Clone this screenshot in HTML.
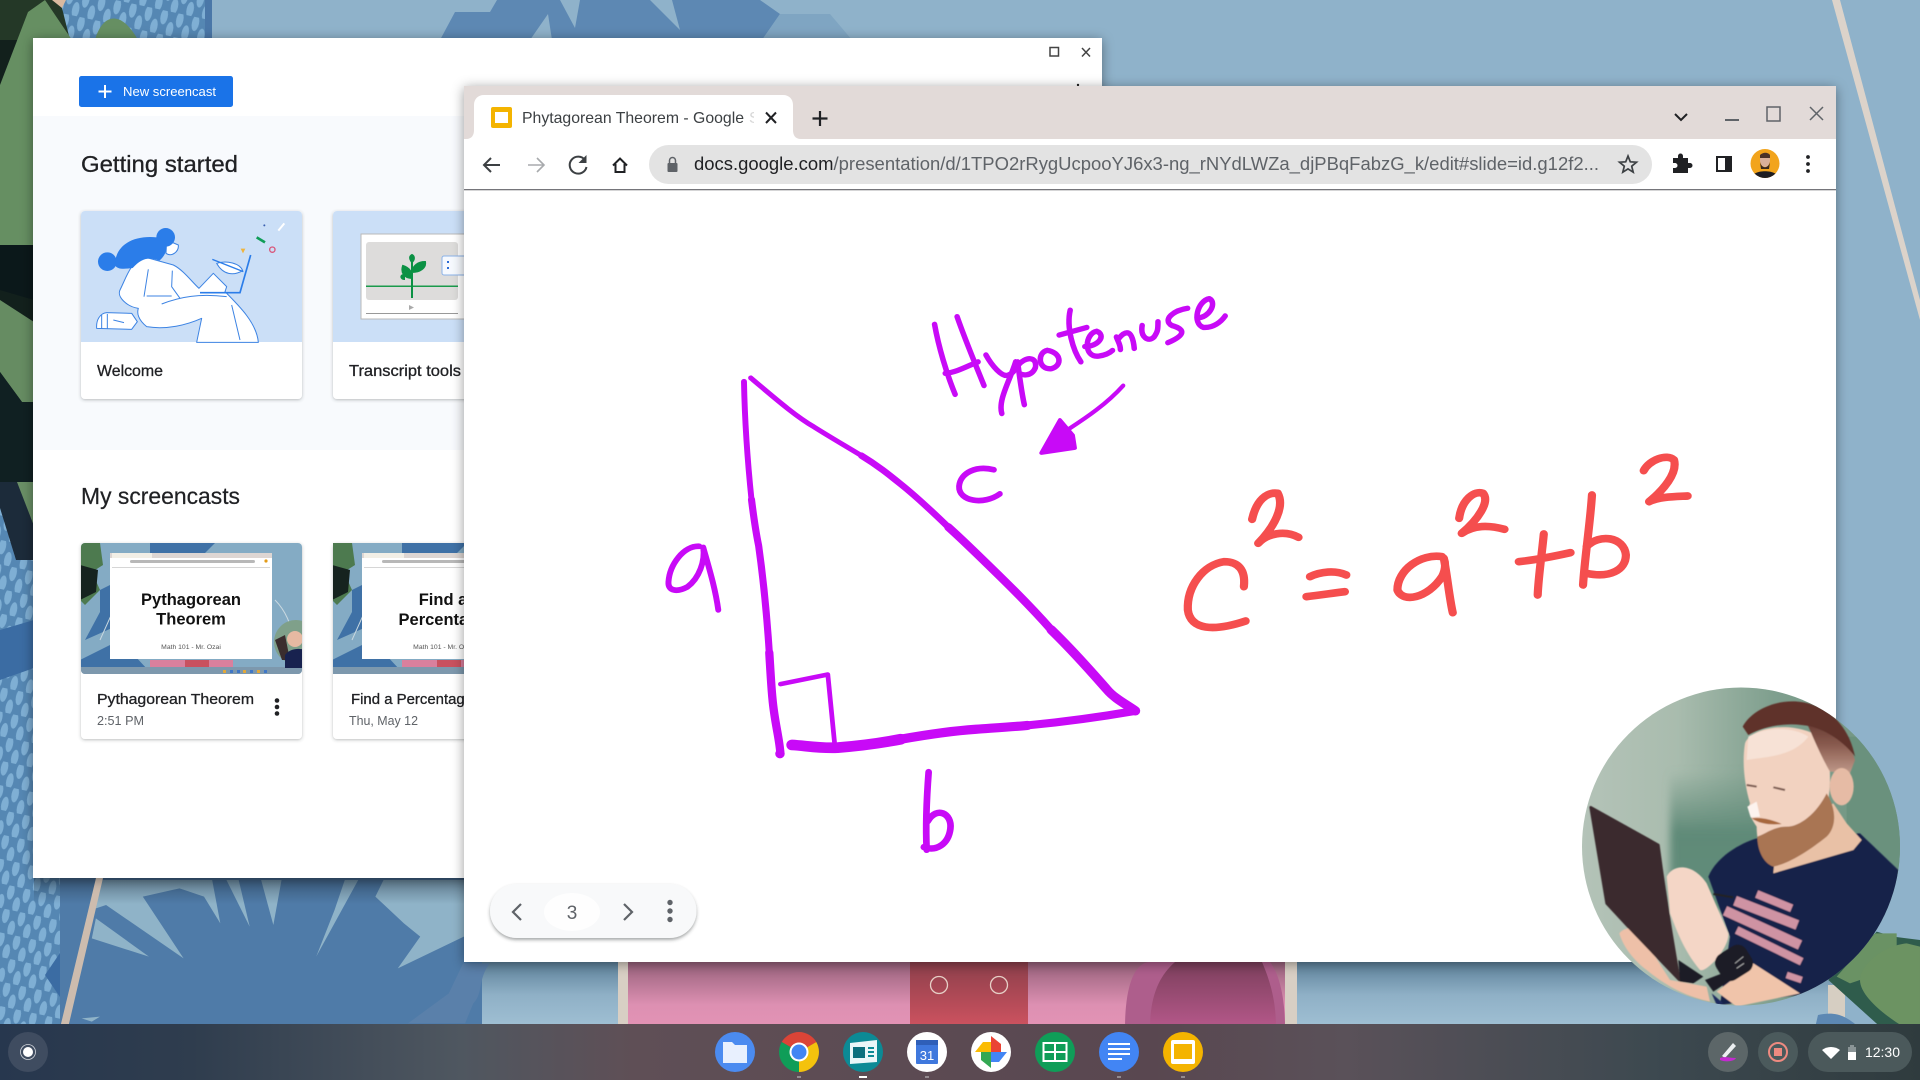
<!DOCTYPE html>
<html><head><meta charset="utf-8"><title>Phytagorean Theorem</title>
<style>html,body{margin:0;padding:0;width:1920px;height:1080px;overflow:hidden;background:#8fb2ca}svg{display:block;font-family:"Liberation Sans",sans-serif}</style>
</head><body>
<svg width="1920" height="1080" viewBox="0 0 1920 1080" xmlns="http://www.w3.org/2000/svg">
<defs>
<pattern id="mesh" width="16" height="24" patternUnits="userSpaceOnUse" patternTransform="rotate(12)">
<rect width="16" height="24" fill="#5587b3"/><ellipse cx="4" cy="6" rx="3.6" ry="8" fill="#7fafd4"/><ellipse cx="12" cy="18" rx="3.6" ry="8" fill="#7fafd4"/>
</pattern>
<linearGradient id="pink" x1="0" y1="0" x2="0" y2="1"><stop offset="0" stop-color="#96607a"/><stop offset=".65" stop-color="#dd90b2"/><stop offset="1" stop-color="#e393b5"/></linearGradient>
<linearGradient id="red" x1="0" y1="0" x2="0" y2="1"><stop offset="0" stop-color="#8c3f4b"/><stop offset="1" stop-color="#cf5360"/></linearGradient>
<linearGradient id="ring" x1="0" y1="0" x2="0" y2="1"><stop offset="0" stop-color="#7c3f5c"/><stop offset="1" stop-color="#b5588a"/></linearGradient>
<linearGradient id="lite" x1="0" y1="0" x2="0" y2="1"><stop offset="0" stop-color="#5c8099"/><stop offset=".5" stop-color="#8fb0c6"/><stop offset="1" stop-color="#a0c0d4"/></linearGradient>
<linearGradient id="shade" x1="0" y1="0" x2="0" y2="1"><stop offset="0" stop-color="#1c2c3c" stop-opacity=".45"/><stop offset="1" stop-color="#1c2c3c" stop-opacity="0"/></linearGradient>
<linearGradient id="shelf" x1="0" y1="0" x2="1" y2="0">
<stop offset="0" stop-color="#27374e"/><stop offset=".1" stop-color="#2f3d4e"/><stop offset=".24" stop-color="#4f5760"/><stop offset=".33" stop-color="#5f4f56"/><stop offset=".6" stop-color="#594750"/><stop offset=".7" stop-color="#5a5159"/><stop offset=".86" stop-color="#3d4950"/><stop offset="1" stop-color="#2f3b3e"/>
</linearGradient>
<linearGradient id="cambg" x1="0" y1="0" x2="1" y2="0"><stop offset="0" stop-color="#b4c3b8"/><stop offset=".3" stop-color="#a9bcae"/><stop offset=".6" stop-color="#7f9f8e"/><stop offset="1" stop-color="#6f9480"/></linearGradient>
<linearGradient id="camdark" x1="0" y1="0" x2="0" y2="1"><stop offset="0" stop-color="#668f7c" stop-opacity="0"/><stop offset=".45" stop-color="#5f8a78"/><stop offset="1" stop-color="#628c79"/></linearGradient>
<linearGradient id="fade" x1="0" y1="0" x2="0" y2="1"><stop offset="0" stop-color="#5f332c"/><stop offset=".5" stop-color="#8a5c50"/><stop offset="1" stop-color="#c09a8a"/></linearGradient>
<filter id="sh" x="-5%" y="-5%" width="110%" height="110%"><feDropShadow dx="0" dy="2" stdDeviation="6" flood-color="#000" flood-opacity=".4"/></filter>
<filter id="cs" x="-5%" y="-5%" width="110%" height="115%"><feDropShadow dx="0" dy="1" stdDeviation="1.5" flood-color="#3c4043" flood-opacity=".35"/></filter>
<filter id="ps" x="-5%" y="-15%" width="110%" height="140%"><feDropShadow dx="0" dy="2" stdDeviation="1.5" flood-color="#3c4043" flood-opacity=".45"/></filter>
<filter id="soft" x="-5%" y="-5%" width="110%" height="110%"><feGaussianBlur stdDeviation="1.6"/></filter>
<filter id="softer" x="-20%" y="-20%" width="140%" height="140%"><feGaussianBlur stdDeviation="12"/></filter>
<clipPath id="cam"><circle cx="1741" cy="846.5" r="159"/></clipPath>
<clipPath id="ava"><ellipse cx="1765" cy="163.500" rx="14.500" ry="14.500"/></clipPath>
<clipPath id="tabc"><rect x="520" y="100" width="234" height="32"/></clipPath>
<clipPath id="th"><rect x="81" y="543" width="221" height="131" rx="4"/></clipPath>
<clipPath id="th2"><rect x="333" y="543" width="131" height="131"/></clipPath>
<g id="thumb">
<rect x="80" y="543" width="222" height="131" fill="#84abc4"/>
<path d="M150 543H215L205 553H150ZM100 590L130 575V620L85 640L100 612ZM80 660L120 640L148 670H80Z" fill="#3f71a6"/>
<path d="M80 543H100L103 565L92 572L100 590L85 605L80 600Z" fill="#4d7a4f"/><path d="M80 565L98 570L96 592L80 600Z" fill="#16231f"/>
<path d="M100 640L118 600M275 600C285 610 292 625 293 640" stroke="#c9d8e0" stroke-width="1" fill="none"/>
<rect x="110" y="553" width="162" height="106" fill="#fff"/><rect x="110" y="553" width="162" height="5" fill="#ddd6d3"/>
<rect x="112" y="553" width="40" height="5" fill="#f2efe6"/>
<rect x="130" y="560" width="125" height="3" rx="1.5" fill="#b8b8b8"/><rect x="112" y="567" width="158" height=".6" fill="#bbb"/>
<circle cx="266" cy="561" r="1.6" fill="#e39b18"/>
<rect x="150" y="660" width="83" height="8" fill="#d9809d"/><rect x="185" y="660" width="24" height="8" fill="#c9515f"/>
<rect x="80" y="667" width="222" height="7" fill="#7d98ad"/>
<path d="M230 670h3v3h-3zM237 670h3v3h-3zM250 670h3v3h-3zM264 670h3v3h-3z" fill="#3f77c7"/>
<path d="M223 670h3v3h-3zM243 670h3v3h-3zM257 670h3v3h-3z" fill="#e2a83a"/>
</g>
</defs>

<!-- wallpaper -->
<rect width="1920" height="1080" fill="#8fb2ca"/>
<rect x="0" y="0" width="212" height="40" fill="url(#mesh)"/>
<path d="M440 40L455 12L490 12L497 0L760 0L780 14L762 40Z" fill="#5d88b3"/>
<path d="M762 40L780 14L830 14L852 40Z" fill="#7fa5c2"/>
<path d="M560 0L580 0L575 28ZM650 0L672 0L680 30ZM530 40L548 14L552 40Z" fill="#8fb2ca"/>
<path d="M205 0H212V40H205Z" fill="#4a77a8"/>
<rect x="0" y="0" width="34" height="560" fill="#12201c"/>
<path d="M0 0H60L70 40H0Z" fill="#243827"/>
<path d="M0 85L28 12L45 0L72 40V245L0 245Z" fill="#668f62"/>
<path d="M95 40C102 15 120 8 138 40Z" fill="#668f62"/><path d="M52 0H66L62 8Z" fill="#d9b9a0"/>
<path d="M0 245H34V300L0 290Z" fill="#0b181a"/>
<path d="M0 300L34 322V402L22 402L0 372Z" fill="#668c62"/>
<path d="M0 372L22 402L34 402V482H0Z" fill="#102022"/>
<path d="M0 482H34V560H0Z" fill="#1c2b3a"/>
<path d="M17 482H34V526Z" fill="#6a8f66"/>
<path d="M0 508L16 560H34V1028H0Z" fill="url(#mesh)"/>
<path d="M0 630L34 620V668L0 680Z" fill="#3b6ca3"/>
<rect x="0" y="878" width="100" height="150" fill="url(#mesh)"/>
<path d="M45 975L62 950L62 1000Z" fill="#3b6ca3"/>
<rect x="60" y="878" width="560" height="150" fill="#4f7ba8"/>
<rect x="482" y="962" width="140" height="66" fill="url(#lite)"/>
<g transform="translate(0,860) scale(.408,.3333)">
<path d="M1135 310H1200C1170 360 1185 400 1160 430L1140 490H1000L1100 400Z" fill="#5a80aa"/>
<path d="M245 60H520L540 190L500 110L440 85L350 110L450 295L260 135L235 145Z" fill="#8fb3c8"/>
<path d="M235 175L365 290L225 235Z" fill="#8fb3c8"/>
<path d="M555 60H585L612 200Z" fill="#8fb3c8"/><path d="M640 60H690L670 195Z" fill="#8fb3c8"/>
<path d="M845 60H878L775 290L820 150Z" fill="#8fb3c8"/>
<path d="M940 60H1140V228L975 325L1030 230L990 190L920 110Z" fill="#8fb3c8"/>
<path d="M200 475L245 470L225 485Z" fill="#8fb3c8"/>
</g>
<rect x="34" y="878" width="430" height="26" fill="url(#shade)"/>
<path d="M96 878L103 878L68 1028L60 1028Z" fill="#cdbcae"/>
<rect x="618" y="962" width="11" height="66" fill="#d8cfc4"/>
<rect x="628" y="962" width="660" height="66" fill="url(#pink)"/>
<rect x="910" y="962" width="118" height="66" fill="url(#red)"/>
<path d="M1125 1028C1125 985 1135 962 1150 962H1270C1280 975 1285 1000 1285 1028Z" fill="#ae5e8c"/>
<path d="M1150 1028C1150 995 1160 975 1175 962H1262C1272 985 1276 1005 1276 1028Z" fill="url(#ring)"/>
<rect x="1285" y="962" width="12" height="66" fill="#d8cfc4"/>
<rect x="1297" y="962" width="540" height="66" fill="url(#lite)"/>
<circle cx="939" cy="985" r="8.5" fill="none" stroke="#e6cfc6" stroke-width="1.3"/>
<circle cx="999" cy="985" r="8.5" fill="none" stroke="#e6cfc6" stroke-width="1.3"/>
<rect x="1836" y="0" width="84" height="1030" fill="#8fb2ca"/>
<path d="M1832 0H1840L1920 300V320Z" fill="#dcd3ca"/>
<rect x="1828" y="985" width="17" height="45" fill="#d6cec2"/>
<path d="M1818 1015C1840 1010 1850 1020 1860 1028H1815Z" fill="#5d88b3"/>
<g transform="translate(1560,670) scale(.33333)">
<path d="M805 930L950 785L1000 800L1080 810V1070H960Z" fill="#2f5c4c"/>
<path d="M830 920L945 790L1010 790L1010 830L900 930L870 940Z" fill="#6a9264"/>
<path d="M900 930C900 890 960 830 1040 820L1080 830V1070H1030C980 1040 900 980 900 930Z" fill="#6c9362"/>
</g>

<!-- back window -->
<g filter="url(#sh)"><rect x="33" y="38" width="1069" height="840" fill="#fff"/></g>
<rect x="33" y="116" width="1069" height="334" fill="#f8fafd"/>
<rect x="79" y="76" width="154" height="31" rx="2.5" fill="#1a73e8"/>
<path d="M105 85V98M98.500 91.500H111.500" stroke="#fff" stroke-width="2"/>
<text x="123" y="96" font-size="13" fill="#fff" textLength="93" lengthAdjust="spacingAndGlyphs">New screencast</text>
<text x="81" y="172" font-size="23" fill="#202124" stroke="#202124" stroke-width=".3" textLength="157" lengthAdjust="spacingAndGlyphs">Getting started</text>

<g filter="url(#cs)"><rect x="81" y="211" width="221" height="188" rx="4" fill="#fff"/></g>
<path d="M81 342V215a4 4 0 0 1 4-4H298a4 4 0 0 1 4 4V342Z" fill="#cbdff7"/>
<g transform="scale(.33333)">
<g stroke="#3c83e3" stroke-width="3" fill="#fff" stroke-linejoin="round">
<path d="M290 985C288 960 300 940 320 938L395 940L412 965L395 988Z"/>
<path d="M305 945V985M322 942V986M340 960L372 968"/>
<path d="M430 770L520 795C550 810 575 845 597 865L640 820L680 860L675 875C720 920 770 970 775 1027H590L605 955C560 975 500 990 440 980C415 960 410 940 415 925C380 920 350 890 360 870C380 830 390 790 430 770Z"/>
<path d="M485 912C540 890 600 880 680 890M445 808L432 890M517 812L515 860L540 895M440 888H515M695 915L720 1020" fill="none"/>
<path d="M500 720L535 735C537 755 515 772 498 760Z"/>
<path d="M650 790C680 780 720 790 728 812C700 828 670 825 650 790Z"/>
</g>
<circle cx="497" cy="712" r="28" fill="#2b7de9"/><circle cx="322" cy="785" r="28" fill="#2b7de9"/>
<path d="M345 795C345 735 400 705 470 712C515 725 500 765 478 782C445 770 425 775 398 804C370 808 350 808 345 795Z" fill="#2b7de9"/>
<path d="M752 765L720 878H600" fill="none" stroke="#2b7de9" stroke-width="5"/>
<path d="M637 778L730 815" stroke="#2b7de9" stroke-width="4"/>
<path d="M770 712L795 727" stroke="#0f9d58" stroke-width="8"/>
<circle cx="817" cy="749" r="8" fill="none" stroke="#d9567a" stroke-width="4"/>
<path d="M722 746H736L729 760Z" fill="#f0b43c"/>
<path d="M835 692L853 670" stroke="#fff" stroke-width="6"/><circle cx="793" cy="676" r="3" fill="#3a5fb0"/>
</g>
<text x="97" y="376" font-size="16" fill="#202124" stroke="#202124" stroke-width=".3" textLength="66" lengthAdjust="spacingAndGlyphs">Welcome</text>

<g filter="url(#cs)"><rect x="333" y="211" width="221" height="188" rx="4" fill="#fff"/></g>
<path d="M333 342V215a4 4 0 0 1 4-4H550a4 4 0 0 1 4 4V342Z" fill="#cbdff7"/>
<rect x="361" y="234" width="110" height="85" fill="#fff" stroke="#b9b9b9" stroke-width="1"/>
<rect x="366" y="242" width="92" height="58" rx="3" fill="#dddcdb"/>
<rect x="366" y="285.500" width="92" height="1.500" fill="#1a9a4b"/>
<rect x="366" y="313" width="92" height="1" fill="#999"/>
<path d="M412 255V298M412 278C404 278 401 272 403 266C409 268 412 272 412 278ZM412 272C420 272 426 268 425 262C418 262 413 266 412 272ZM412 262C409 258 410 256 412 255C414 256 415 259 412 262ZM404 275C400 275 401 279 404 279Z" fill="#0b9144" stroke="#0b9144" stroke-width="2"/>
<path d="M409 305L414 307.500L409 310Z" fill="#aaa"/>
<rect x="442" y="256" width="30" height="19" rx="2" fill="#f6f9fe" stroke="#8ab2e8"/>
<path d="M447 262H449M447 268H449" stroke="#2b6bd6" stroke-width="2"/>
<text x="349" y="376" font-size="16" fill="#202124" stroke="#202124" stroke-width=".3" textLength="112" lengthAdjust="spacingAndGlyphs">Transcript tools</text>

<text x="81" y="504" font-size="23" fill="#202124" stroke="#202124" stroke-width=".2" textLength="159" lengthAdjust="spacingAndGlyphs">My screencasts</text>

<g filter="url(#cs)"><rect x="81" y="543" width="221" height="196" rx="4" fill="#fff"/></g>
<g clip-path="url(#th)">
<use href="#thumb"/>
<circle cx="296" cy="642" r="22" fill="#7fa08a"/>
<path d="M275 640L285 635L290 660L282 660Z" fill="#3a2d2e"/>
<circle cx="295" cy="639" r="8" fill="#e6b9a2"/><path d="M285 655C290 648 300 648 305 650V668H285Z" fill="#18224f"/>
</g>
<text x="191" y="605" font-size="16.500" font-weight="bold" fill="#111" text-anchor="middle">Pythagorean</text>
<text x="191" y="624.500" font-size="16.500" font-weight="bold" fill="#111" text-anchor="middle">Theorem</text>
<text x="191" y="649" font-size="6.800" fill="#555" text-anchor="middle">Math 101 - Mr. Ozai</text>
<text x="97" y="704" font-size="15" fill="#202124" stroke="#202124" stroke-width=".3" textLength="157" lengthAdjust="spacingAndGlyphs">Pythagorean Theorem</text>
<text x="97" y="725" font-size="13" fill="#5f6368" textLength="47" lengthAdjust="spacingAndGlyphs">2:51 PM</text>
<circle cx="277" cy="700.500" r="2.300" fill="#202124"/><circle cx="277" cy="707" r="2.300" fill="#202124"/><circle cx="277" cy="713.500" r="2.300" fill="#202124"/>

<g filter="url(#cs)"><rect x="333" y="543" width="221" height="196" rx="4" fill="#fff"/></g>
<g clip-path="url(#th2)"><use href="#thumb" x="252"/></g>
<text x="443" y="605" font-size="16.500" font-weight="bold" fill="#111" text-anchor="middle">Find a</text>
<text x="443" y="625" font-size="16.500" font-weight="bold" fill="#111" text-anchor="middle">Percentage</text>
<text x="443" y="649" font-size="6.800" fill="#555" text-anchor="middle">Math 101 - Mr. Ozai</text>
<text x="351" y="704" font-size="15" fill="#202124" stroke="#202124" stroke-width=".3" textLength="122" lengthAdjust="spacingAndGlyphs">Find a Percentage</text>
<text x="349" y="725" font-size="13" fill="#5f6368" textLength="69" lengthAdjust="spacingAndGlyphs">Thu, May 12</text>

<rect x="1050" y="47.500" width="8.500" height="8.500" fill="none" stroke="#444" stroke-width="1.500"/>
<path d="M1082 48L1090 56.500M1090 48L1082 56.500" stroke="#444" stroke-width="1.500"/>
<circle cx="1078" cy="85" r="1.200" fill="#222"/>

<!-- chrome window -->
<g filter="url(#sh)"><rect x="464" y="86" width="1372" height="876" fill="#fff"/></g>
<rect x="464" y="86" width="1372" height="53" fill="#e2dad8"/>
<path d="M464 139H466C472 139 474 135 474 130V105C474 99 478 95 484 95H783C789 95 793 99 793 105V130C793 135 795 139 801 139H464Z" fill="#fff"/>
<rect x="464" y="189" width="1372" height="1.300" fill="#75757a"/>
<rect x="491" y="107" width="21" height="21" rx="2" fill="#f4b400"/><rect x="495" y="112" width="13" height="11" fill="#fff"/>
<g clip-path="url(#tabc)">
<text x="522" y="123" font-size="16" fill="#3c4043" textLength="222" lengthAdjust="spacingAndGlyphs">Phytagorean Theorem - Google</text>
<text x="749" y="123" font-size="16" fill="#d8d8d8">S</text></g>
<path d="M766 112.500L776 123M776 112.500L766 123" stroke="#202124" stroke-width="2"/>
<path d="M820 111V126M812.500 118.500H827.500" stroke="#202124" stroke-width="2.200"/>
<path d="M1675 114L1681 120L1687 114" fill="none" stroke="#202124" stroke-width="2"/>
<path d="M1725 120H1739" stroke="#5f6368" stroke-width="2"/>
<rect x="1767" y="107" width="13" height="14" fill="none" stroke="#5f6368" stroke-width="1.500"/>
<path d="M1810 107L1823 120M1823 107L1810 120" stroke="#5f6368" stroke-width="1.500"/>

<path d="M500 165H485M491 158L484 165L491 172" fill="none" stroke="#3c4043" stroke-width="2"/>
<path d="M528 165H543M537 158L544 165L537 172" fill="none" stroke="#a8aaad" stroke-width="1.600"/>
<path d="M585 160A8.500 8.500 0 1 0 586.500 167" fill="none" stroke="#3c4043" stroke-width="2"/><path d="M586.500 155V163H578.500Z" fill="#3c4043"/>
<path d="M613 165.500L620 158.500L627 165.500M615.500 164V172H624.500V164" fill="none" stroke="#202124" stroke-width="2"/>
<rect x="649" y="145" width="1003" height="39" rx="19.500" fill="#e3e3e3"/>
<rect x="667.500" y="163" width="10" height="9" rx="1" fill="#5f6368"/><path d="M669.500 163V160.500A3 3 0 0 1 675.500 160.500V163" fill="none" stroke="#5f6368" stroke-width="1.500"/>
<text x="694" y="170" font-size="18" fill="#5f6368" textLength="905" lengthAdjust="spacingAndGlyphs"><tspan fill="#202124">docs.google.com</tspan>/presentation/d/1TPO2rRygUcpooYJ6x3-ng_rNYdLWZa_djPBqFabzG_k/edit#slide=id.g12f2...</text>
<path d="M1628 156L1630.300 161.800L1636.500 162.200L1631.700 166.200L1633.200 172.200L1628 168.900L1622.800 172.200L1624.300 166.200L1619.500 162.200L1625.700 161.800Z" fill="none" stroke="#3c4043" stroke-width="1.700"/>
<path d="M1673 158H1678V156A2.500 2.500 0 0 1 1683 156V158H1688V163H1690A2.500 2.500 0 0 1 1690 168H1688V173H1673V168H1675A2.500 2.500 0 0 0 1675 163H1673Z" fill="#202124"/>
<rect x="1717" y="157" width="14" height="14" fill="#fff" stroke="#202124" stroke-width="2"/><rect x="1725" y="157" width="6" height="14" fill="#202124"/>
<g clip-path="url(#ava)"><rect x="1750" y="149" width="30" height="30" fill="#f2a41c"/><ellipse cx="1765" cy="160" rx="5" ry="7" fill="#d9b09a"/><path d="M1760 162C1762 169 1768 169 1770 162L1769 169H1761Z" fill="#3a2a20"/><path d="M1751 178C1753 169 1777 169 1779 178Z" fill="#1c1c22"/><path d="M1760 155C1763 152 1768 152 1770 155L1770 158L1760 158Z" fill="#4a3228"/></g>
<circle cx="1808" cy="157" r="1.900" fill="#202124"/><circle cx="1808" cy="164" r="1.900" fill="#202124"/><circle cx="1808" cy="171" r="1.900" fill="#202124"/>

<!-- ink: triangle -->
<g transform="translate(640,270) scale(.3954,.3827)" fill="none" stroke="#c80af7" stroke-linecap="round" stroke-linejoin="round">
<path stroke-width="15" d="M263 292C265 400 272 500 282 600"/>
<path stroke-width="18" d="M282 600C288 650 294 690 300 720C315 830 322 920 327 1000"/>
<path stroke-width="21" d="M327 1000C330 1050 332 1090 335 1120C340 1180 352 1220 355 1262"/>
<circle cx="354" cy="1264" r="12" fill="#c80af7" stroke="none"/>
<path stroke-width="13" d="M280 282C330 325 390 380 440 410C480 436 520 460 560 485"/>
<path stroke-width="17" d="M560 485C600 510 630 535 660 560C700 593 740 632 780 672"/>
<path stroke-width="21" d="M780 672C805 695 828 718 850 740C920 810 980 870 1040 940"/>
<path stroke-width="24" d="M1040 940C1100 1000 1150 1060 1180 1095C1200 1120 1230 1135 1253 1152"/>
<path stroke-width="21" d="M1253 1152C1180 1165 1080 1180 980 1190"/>
<path stroke-width="24" d="M980 1190C940 1194 890 1197 850 1200C780 1205 720 1215 660 1226"/>
<path stroke-width="28" d="M660 1226C600 1238 550 1244 500 1248C450 1250 420 1243 384 1241"/>
<path stroke-width="12" d="M355 1082L475 1057L492 1235"/>
<path stroke-width="15" d="M150 722C110 720 75 770 72 815C70 840 95 842 120 828C150 805 165 760 160 725C175 780 190 830 198 888"/>
<path stroke-width="15" d="M895 522C850 510 810 530 807 565C805 605 870 615 910 585"/>
<path stroke-width="17" d="M730 1312C725 1380 722 1450 725 1515M728 1440C750 1400 790 1420 785 1460C780 1500 750 1520 718 1508"/>
<g stroke-width="14">
<path d="M745 142C755 200 775 270 797 325M802 122C825 190 850 250 870 302M772 270C800 268 830 250 855 240"/>
<path d="M875 222C890 250 915 280 930 275C945 270 955 255 950 240M950 240C935 290 905 340 915 375"/>
<path d="M955 240C960 280 965 320 972 352M955 250C975 225 1005 225 1000 255C990 280 965 275 960 270"/>
<path d="M1030 210C1005 215 1005 260 1040 258C1070 250 1065 215 1030 210"/>
<path d="M1088 105C1078 150 1095 210 1115 240M1060 170L1130 150"/>
<path d="M1125 200C1160 200 1180 170 1155 160C1125 165 1120 230 1160 225C1180 222 1190 215 1195 210"/>
<path d="M1205 175C1210 190 1215 195 1215 208M1210 180C1225 160 1245 150 1250 205"/>
<path d="M1270 145C1265 175 1285 190 1300 175C1310 160 1310 155 1310 135"/>
<path d="M1385 100C1350 105 1320 130 1345 145C1380 155 1380 170 1335 190"/>
<path d="M1410 125C1440 125 1460 85 1440 75C1410 80 1395 140 1425 150C1450 152 1470 135 1480 120"/>
</g>
<path stroke-width="11" d="M1222 302C1180 350 1130 385 1085 415"/>
<path d="M1062 392L1015 478L1100 465L1095 432Z" fill="#c80af7" stroke-width="10"/>
</g>
<!-- ink: equation -->
<g transform="translate(1160,430) scale(.357,.3333)" fill="none" stroke="#f54e4e" stroke-width="23" stroke-linecap="round" stroke-linejoin="round">
<path d="M235 470C240 420 220 395 180 395C120 405 75 470 78 540C85 600 150 605 240 573"/>
<path d="M258 268C270 210 300 185 330 190C350 230 320 290 275 340C300 310 350 300 388 322"/>
<path d="M420 440C450 425 490 420 522 435M410 500C450 495 480 490 518 485"/>
<path d="M790 380C730 370 665 420 665 480C680 520 750 505 790 440C800 420 800 400 795 385C805 440 810 500 820 548"/>
<path d="M838 265C845 210 880 180 905 190C925 215 890 270 845 310C880 285 920 285 965 298"/>
<path d="M1005 395C1050 390 1100 380 1150 368M1075 312C1070 370 1060 440 1058 495"/>
<path d="M1210 195C1205 280 1190 380 1185 465M1195 350C1230 310 1300 320 1305 375C1305 420 1260 445 1195 430"/>
<path d="M1355 122C1370 90 1420 70 1440 90C1450 130 1410 180 1370 215C1400 200 1440 200 1478 198"/>
</g>

<!-- nav pill -->
<g filter="url(#ps)"><rect x="490" y="884" width="206.500" height="54" rx="27" fill="#f8f9fa"/></g>
<ellipse cx="572" cy="912" rx="28" ry="19" fill="#fefefe"/>
<path d="M521 904L513 912L521 920" fill="none" stroke="#5f6368" stroke-width="2.200"/>
<path d="M624 904L632 912L624 920" fill="none" stroke="#5f6368" stroke-width="2.200"/>
<text x="572" y="919" font-size="19" fill="#5f6368" text-anchor="middle">3</text>
<circle cx="670" cy="902.500" r="2.700" fill="#5f6368"/><circle cx="670" cy="911" r="2.700" fill="#5f6368"/><circle cx="670" cy="919.500" r="2.700" fill="#5f6368"/>

<!-- shelf -->
<rect x="0" y="1024" width="1920" height="56" fill="url(#shelf)"/>
<circle cx="28" cy="1052" r="20" fill="#3f4c60"/><circle cx="28" cy="1052" r="5" fill="#fff"/><circle cx="28" cy="1052" r="7.500" fill="none" stroke="#d0d4da" stroke-width=".8"/>

<circle cx="735" cy="1052" r="20" fill="#4b8bf0"/><path d="M723 1042H732L735 1045H747V1063H723Z" fill="#e8f0fe"/>
<path d="M799 1052L781.700 1042A20 20 0 0 1 816.300 1042Z" fill="#db4437"/>
<path d="M799 1052L816.300 1042A20 20 0 0 1 799 1072Z" fill="#f4c20d"/>
<path d="M799 1052L799 1072A20 20 0 0 1 781.700 1042Z" fill="#0f9d58"/>
<circle cx="799" cy="1052" r="9.500" fill="#fff"/><circle cx="799" cy="1052" r="7.500" fill="#4285f4"/>
<circle cx="863" cy="1052" r="20" fill="#0c8a95"/>
<path d="M850 1043L877 1040V1062L850 1064Z" fill="#eaf6f8"/><rect x="853" y="1047" width="12" height="11" fill="#0c6f7d"/><path d="M868 1048H874M868 1052H874M868 1056H874" stroke="#0c8a95" stroke-width="2"/>
<circle cx="927" cy="1052" r="20" fill="#fff"/><rect x="916" y="1040" width="22" height="24" rx="1" fill="#3f78dd"/><rect x="916" y="1040" width="22" height="5" fill="#2f5fb8"/>
<text x="927" y="1060" font-size="13" fill="#fff" text-anchor="middle">31</text>
<circle cx="991" cy="1052" r="20" fill="#fff"/>
<path d="M991 1052V1036L1001 1044V1052Z" fill="#ea4335"/><path d="M991 1052H1007L999 1062H991Z" fill="#4285f4"/><path d="M991 1052V1068L981 1060V1052Z" fill="#34a853"/><path d="M991 1052H975L983 1042H991Z" fill="#fbbc04"/>
<circle cx="1055" cy="1052" r="20" fill="#0f9d58"/><rect x="1043.500" y="1043" width="23" height="18" fill="none" stroke="#fff" stroke-width="2"/><path d="M1043.500 1052H1066.500M1055 1043V1061" stroke="#fff" stroke-width="2"/>
<circle cx="1119" cy="1052" r="20" fill="#4285f4"/><path d="M1108 1044H1130M1108 1049H1130M1108 1054H1130M1108 1059H1122" stroke="#fff" stroke-width="2"/>
<circle cx="1183" cy="1052" r="20" fill="#f4b400"/><rect x="1171" y="1040" width="24" height="24" rx="2" fill="#fff"/><rect x="1174" y="1044" width="18" height="15" fill="#f4b400"/>
<rect x="797" y="1076.500" width="4" height="1" fill="#ccc"/><rect x="859" y="1076" width="8" height="2" fill="#fff"/><rect x="925" y="1076.500" width="4" height="1" fill="#ccc"/><rect x="1117" y="1076.500" width="4" height="1" fill="#ccc"/><rect x="1181" y="1076.500" width="4" height="1" fill="#ccc"/>

<circle cx="1728" cy="1052" r="20" fill="#5c6668"/>
<path d="M1722 1056L1733 1043L1736 1046L1725 1058Z" fill="#eceff1"/><path d="M1720 1058C1725 1056 1730 1058 1736 1058C1734 1062 1724 1062 1720 1060Z" fill="#c32ad0"/>
<circle cx="1778" cy="1052" r="20" fill="#4b5a5c"/><circle cx="1778" cy="1052" r="9" fill="none" stroke="#ee8a80" stroke-width="2"/><rect x="1774" y="1048" width="8" height="8" fill="#ee8a80"/>
<rect x="1808" y="1032" width="104" height="40" rx="20" fill="#4b595b"/>
<path d="M1822 1050C1827 1046 1835 1046 1840 1050L1831 1059Z" fill="#fff"/>
<rect x="1848" y="1047" width="8" height="13" fill="#fff"/><rect x="1848" y="1047" width="8" height="5" fill="#8a9496"/><rect x="1850" y="1045" width="4" height="2" fill="#8a9496"/>
<text x="1865" y="1057" font-size="13.500" fill="#fff" textLength="35" lengthAdjust="spacingAndGlyphs">12:30</text>

<!-- webcam -->
<g clip-path="url(#cam)">
<rect x="1580" y="686" width="322" height="322" fill="url(#cambg)"/>
<g transform="translate(1560,670) scale(.33333)">
<rect x="330" y="300" width="280" height="420" fill="url(#camdark)" filter="url(#softer)"/>
<rect x="860" y="200" width="180" height="420" fill="#6a917d"/>
<g filter="url(#soft)">
<path d="M445 620C470 560 540 520 590 505L900 490L1015 600C1010 750 930 900 800 940L720 975L480 1005L510 800Z" fill="#16214a"/>
<path d="M640 610L880 540L905 510L860 460L820 400L650 500Z" fill="#e9c1a6"/>
<path d="M555 220C575 165 720 150 790 210C820 280 810 370 800 420C780 520 680 590 640 580C600 560 590 510 590 470C570 440 560 420 570 400C555 350 545 280 555 220Z" fill="#f2d2c0"/>
<path d="M565 200C620 170 700 170 745 200C700 260 620 260 560 270Z" fill="#f7e2d6"/>
<path d="M562 410L590 395L600 440L572 442Z" fill="#fdf3ee"/>
<path d="M735 145C800 130 860 190 885 270L870 310L810 305C795 280 770 230 735 145Z" fill="url(#fade)"/>
<ellipse cx="845" cy="350" rx="36" ry="56" fill="#e6bba5"/>
<path d="M592 500C620 490 640 470 680 470C720 470 770 430 800 370C830 420 830 470 800 500C750 540 690 580 640 590C610 580 592 540 592 500Z" fill="#a97552"/>
<path d="M575 445C600 440 640 450 665 462C630 465 600 462 575 445Z" fill="#a8683c"/>
<path d="M548 170C580 110 680 75 760 105C820 125 870 180 885 260C860 225 810 185 755 170C690 155 620 165 565 195Z" fill="#5f332c"/>
<path d="M560 345L590 350M640 352L675 360" stroke="#7a5a50" stroke-width="6"/>
<path d="M178 790C200 765 235 770 260 820L330 930L440 950L450 995C380 980 320 950 260 900C220 870 190 830 178 790Z" fill="#eec0a8"/>
<path d="M92 412L295 525C310 640 335 800 358 930L205 770L140 700Z" fill="#3b2c2e" stroke="#3b2c2e" stroke-width="8" stroke-linejoin="round"/>
<g stroke="#cf93a3" fill="none"><path d="M590 672L695 715" stroke-width="24"/><path d="M525 692L712 765" stroke-width="30"/><path d="M495 722L720 825" stroke-width="30"/><path d="M530 780L725 875" stroke-width="24"/><path d="M680 915L725 930" stroke-width="20"/></g>
<path d="M460 672L520 682" stroke="#222" stroke-width="6"/>
<path d="M470 965L580 880L720 970L530 1010Z" fill="#f0c4aa"/>
<path d="M320 620C340 580 400 580 440 640L505 790C510 830 440 910 420 900C370 840 350 780 330 730Z" fill="#f4d6c6"/>
<path d="M355 870L430 920L400 940L360 935Z" fill="#1d1f26"/>
<rect x="470" y="835" width="105" height="90" rx="30" fill="#1d1f26" transform="rotate(-32 520 880)"/>
<path d="M435 930L500 905L505 935L460 965Z" fill="#1d1f26"/><path d="M455 970L490 1000L470 1005Z" fill="#1d2a5e"/>
<path d="M525 880L550 860M530 895L552 880" stroke="#c9c9c9" stroke-width="2"/>
</g>
</g>
</g>
</svg>
</body></html>
